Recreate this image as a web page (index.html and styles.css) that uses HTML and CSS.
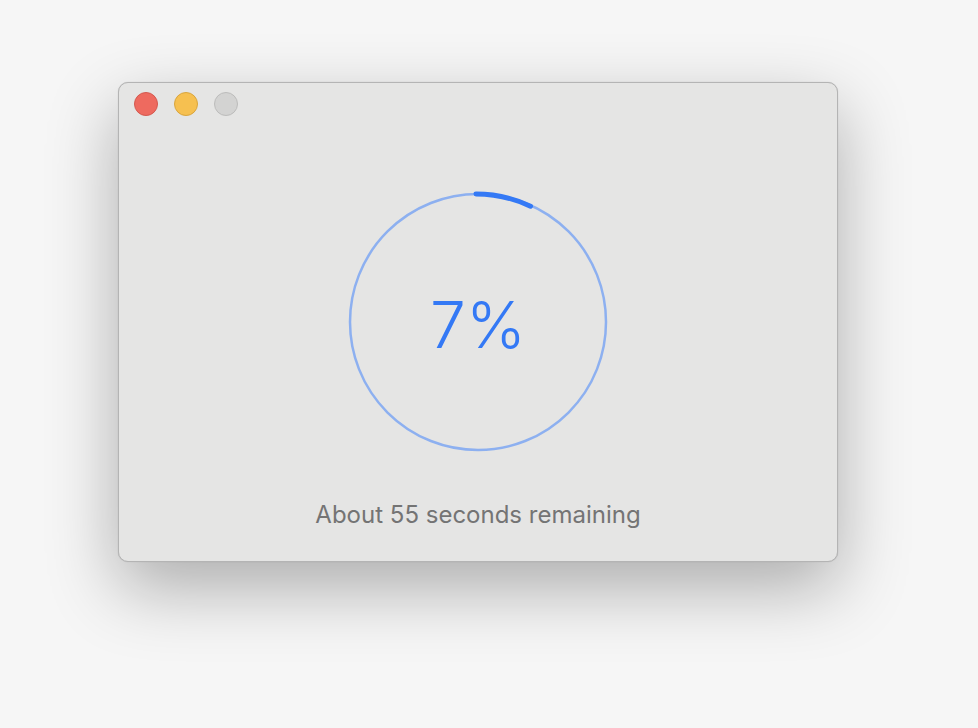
FILE: index.html
```html
<!DOCTYPE html>
<html lang="en">
<head>
    <meta charset="UTF-8">
    <title>Progress</title>
    <link rel="stylesheet" href="styles.css">
</head>
<body>
    <div class="window">
        <div class="titlebar">
            <span class="light red"></span>
            <span class="light yellow"></span>
            <span class="light gray"></span>
        </div>
        <div class="content">
            <div class="ring">
                <svg width="262" height="262" viewBox="0 0 262 262">
                    <circle cx="131" cy="131" r="128" fill="none" stroke="#8db0f0" stroke-width="2.5"/>
                    <!-- 7% arc from the top -->
                    <path d="M 129 3 A 128 128 0 0 1 183.5 15.2" fill="none" stroke="#3479f5" stroke-width="5" stroke-linecap="round"/>
                </svg>
                <div class="percent">7%</div>
            </div>
            <p class="remaining">About 55 seconds remaining</p>
        </div>
    </div>
</body>
</html>
```

FILE: styles.css
```css
*{
    margin: 0;
    padding: 0;
    box-sizing: border-box;
}
html, body{
    min-height: 100%;
}
body{
    background-color: #f6f6f6;
    font-family: "Inter", "Liberation Sans", sans-serif;
    padding: 82px 0 0 118px;
    min-height: 100vh;
}
.window{
    width: 720px;
    height: 480px;
    background-color: #e5e5e4;
    border: 1px solid #b4b4b4;
    border-radius: 10px;
    box-shadow: 0 26px 70px rgba(0,0,0,0.3), 0 0 1px rgba(0,0,0,0.2);
}
.titlebar{
    display: flex;
    gap: 16px;
    padding: 9px 0 0 15px;
    height: 34px;
}
.light{
    width: 24px;
    height: 24px;
    border-radius: 50%;
    display: inline-block;
}
.red{
    background-color: #ee6a5f;
    border: 1px solid #d4594f;
}
.yellow{
    background-color: #f6c050;
    border: 1px solid #d9a53e;
}
.gray{
    background-color: #d3d3d2;
    border: 1px solid #bcbcbb;
}
.content{
    display: flex;
    flex-direction: column;
    align-items: center;
    padding-top: 74px;
}
.ring{
    position: relative;
    width: 262px;
    height: 262px;
}
.ring svg{
    display: block;
}
.percent{
    position: absolute;
    left: 0;
    right: 0;
    top: 96px;
    text-align: center;
    font-size: 64px;
    font-weight: 300;
    color: #3479f5;
    line-height: 76px;
}
.remaining{
    margin-top: 47px;
    font-size: 24px;
    color: #747474;
    line-height: 30px;
}
```
